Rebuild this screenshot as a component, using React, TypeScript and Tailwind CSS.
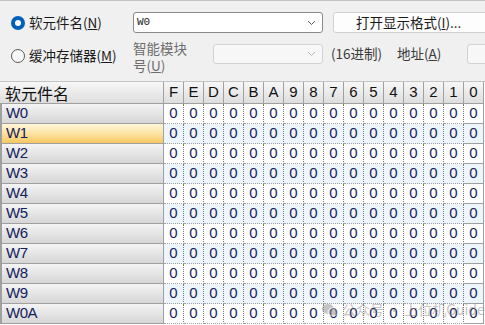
import React from "react";

const cols = ["F", "E", "D", "C", "B", "A", "9", "8", "7", "6", "5", "4", "3", "2", "1", "0"];
const rows = ["W0", "W1", "W2", "W3", "W4", "W5", "W6", "W7", "W8", "W9", "W0A"];

const cjk = { fontFamily: '"Noto Sans CJK SC", "Noto Sans", sans-serif' };
const latin = { fontFamily: '"Liberation Sans", Arial, sans-serif' };

function Chevron({ color = "#5a5a5a" }: { color?: string }) {
  return (
    <svg width="9" height="6" viewBox="0 0 9 6" fill="none">
      <path d="M1 1l3.5 3.5L8 1" stroke={color} strokeWidth="1" />
    </svg>
  );
}

function Radio({ checked }: { checked?: boolean }) {
  if (checked) {
    return (
      <span className="flex h-[14px] w-[14px] shrink-0 items-center justify-center rounded-full bg-[#005fb8]">
        <span className="h-[6px] w-[6px] rounded-full bg-white" />
      </span>
    );
  }
  return <span className="h-[14px] w-[14px] shrink-0 rounded-full border border-[#5c5c5c] bg-[#f6f6f6]" />;
}

function TopPanel() {
  return (
    <div className="h-[82px] border-t border-b border-[#c4c4c4] bg-[#f0f0f0] text-[13.5px] text-[#1a1a1a]" style={cjk}>
      <div className="mt-[11px] flex h-[21px] items-center">
        <div className="flex w-[133px] shrink-0 items-center gap-[4px] pl-[11px]">
          <Radio checked />
          <span className="whitespace-nowrap leading-none">
            软元件名(<u>N</u>)
          </span>
        </div>
        <div className="flex h-[21px] w-[190px] shrink-0 items-center justify-between rounded-[3px] border border-[#8a8a8a] bg-white pl-[3px] pr-[6px]">
          <span className="text-[11px] leading-none" style={{ fontFamily: '"Liberation Mono", monospace' }}>
            W0
          </span>
          <Chevron />
        </div>
        <div className="ml-[10px] flex h-[21px] w-[160px] shrink-0 items-center rounded-l-[3px] border border-[#d0d0d0] bg-[#fdfdfd] pl-[22px]">
          <span className="whitespace-nowrap leading-none">
            打开显示格式(<u>I</u>)...
          </span>
        </div>
      </div>
      <div className="mt-[11px] flex h-[26px] items-start">
        <div className="mt-[5px] flex w-[133px] shrink-0 items-center gap-[4px] pl-[11px]">
          <Radio />
          <span className="whitespace-nowrap leading-none">
            缓冲存储器(<u>M</u>)
          </span>
        </div>
        <div className="-mt-[4px] w-[80px] shrink-0 leading-[17px] text-[#6d6d6d]">
          智能模块
          <br />
          号(<u>U</u>)
        </div>
        <div className="flex h-[20px] w-[110px] shrink-0 items-center justify-end rounded-[3px] border border-[#d2d2d2] bg-[#f7f7f7] pr-[6px]">
          <Chevron color="#b8b8b8" />
        </div>
        <span className="ml-[8px] mt-[3px] w-[66px] shrink-0 whitespace-nowrap leading-none text-[#3a3a3a]">(16进制)</span>
        <span className="mt-[3px] w-[70px] shrink-0 whitespace-nowrap leading-none text-[#3a3a3a]">
          地址(<u>A</u>)
        </span>
        <div className="h-[20px] w-[30px] shrink-0 rounded-l-[3px] border border-[#d2d2d2] bg-[#f7f7f7]" />
      </div>
    </div>
  );
}

function Grid() {
  return (
    <div className="grid grid-cols-[164px_repeat(16,20px)] bg-white" style={latin}>
      <div className="flex h-[22px] items-center border-r border-b border-[#a0a0a0] bg-gradient-to-b from-[#f7f7f7] to-[#dedede] pl-[5px] text-[16px] text-[#111]" style={cjk}>
        软元件名
      </div>
      {cols.map((c) => (
        <div
          key={c}
          className="flex h-[22px] items-center justify-center border-r border-b border-[#a0a0a0] bg-gradient-to-b from-[#f7f7f7] to-[#dedede] text-[15px] text-[#111]"
        >
          {c}
        </div>
      ))}
      {rows.map((r, i) => (
        <React.Fragment key={r}>
          <div
            className={`flex h-[20px] items-center border-l-2 border-r border-b border-[#a0a0a0] pl-[4px] text-[15px] tracking-[-0.5px] text-[#14205a] ${
              i === 1
                ? "bg-gradient-to-b from-[#fff6da] via-[#fde3a2] to-[#f7c75e]"
                : "bg-gradient-to-b from-[#f4f4f4] to-[#d6d6d6]"
            }`}
          >
            {r}
          </div>
          {cols.map((c, j) => (
            <div
              key={c}
              className={`flex h-[20px] items-center justify-center border-b border-b-[#a0a0a0] text-[15px] text-[#1a1f5c] ${
                j === cols.length - 1 ? "border-r border-r-[#a0a0a0]" : "border-r border-dotted border-r-[#7a7a7a]"
              } ${i % 2 === 1 ? "bg-[#edf5fd]" : "bg-white"}`}
            >
              0
            </div>
          ))}
        </React.Fragment>
      ))}
    </div>
  );
}

export default function App() {
  return (
    <div className="relative h-[325px] w-[485px] overflow-hidden bg-white">
      <TopPanel />
      <Grid />
      <div className="pointer-events-none absolute left-[322px] top-[299px] flex items-center gap-[4px] text-[14px] text-[#8a8a8a] opacity-50" style={cjk}>
        <svg width="16" height="14" viewBox="0 0 16 14">
          <ellipse cx="6" cy="6" rx="6" ry="5" fill="#8a8a8a" />
          <ellipse cx="11" cy="9" rx="5" ry="4" fill="#8a8a8a" stroke="#fff" strokeWidth="1" />
        </svg>
        <span>公众号 · 上位机Guide</span>
      </div>
    </div>
  );
}
